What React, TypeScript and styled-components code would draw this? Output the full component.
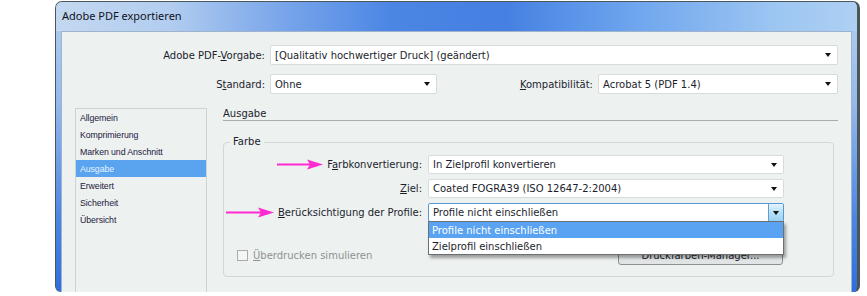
import React, { FC } from "react";
import styled, { createGlobalStyle } from "styled-components";

const GlobalStyle = createGlobalStyle`
  html, body {
    margin: 0;
    padding: 0;
    background: #fff;
  }
  body {
    font-family: "DejaVu Sans", Verdana, sans-serif;
    color: #1b1e2c;
  }
`;

const Screen = styled.div`
  width: 867px;
  height: 296px;
  box-sizing: border-box;
  padding: 1px 7px 4px 55px;
  display: flex;
  overflow: hidden;
  background: #fff;
`;

const Window = styled.div`
  flex: 1;
  display: flex;
  flex-direction: column;
  border: 1px solid #4c5658;
  border-right-width: 3px;
  border-bottom: none;
  border-radius: 7px 7px 6px 6px;
  padding: 0 5px;
  overflow: hidden;
  background: linear-gradient(
    180deg,
    #b4d0f0 0%,
    #94b9ec 35%,
    #4a86e2 75%,
    #2f6fdc 100%
  );
`;

const TitleBar = styled.div`
  height: 29px;
  margin: 0 -5px;
  padding: 0 0 2px 6px;
  box-sizing: border-box;
  display: flex;
  align-items: center;
  font-family: "Noto Sans", "DejaVu Sans", sans-serif;
  font-size: 11px;
  color: #10131c;
  background: linear-gradient(
    90deg,
    #c3d8f0 0%,
    #b2cdf0 14%,
    #7aa6ea 28%,
    #4b86e4 42%,
    #4580e2 56%,
    #6ea5ee 72%,
    #9dc6f2 90%,
    #aed0f3 100%
  );
`;

const Client = styled.div`
  flex: 1;
  display: flex;
  flex-direction: column;
  min-height: 0;
  background: #edf1f0;
  border: 1px solid #9fb4cc;
  border-bottom: none;
  padding: 13px 13px 0 13px;
`;

const TopForm = styled.div`
  display: flex;
  flex-direction: column;
  gap: 9px;
`;

const FieldRow = styled.div`
  display: flex;
  align-items: center;
  gap: 5px;
  height: 20px;
`;

const Label = styled.div<{ $width?: number }>`
  ${(p) => (p.$width ? `width: ${p.$width}px;` : "flex: 1;")}
  flex-shrink: 0;
  display: flex;
  align-items: center;
  justify-content: flex-end;
  gap: 4px;
  font-size: 10px;
  white-space: nowrap;
`;

const SelectBox = styled.div<{ $width?: number; $focused?: boolean }>`
  ${(p) => (p.$width ? `width: ${p.$width}px;` : "flex: 1;")}
  height: 100%;
  box-sizing: border-box;
  position: relative;
  display: flex;
  align-items: stretch;
  background: #fff;
  border: 1px solid ${(p) => (p.$focused ? "#5598d6" : "#d6dcdc")};
  border-radius: 2px;
  font-size: 10px;
`;

const SelectValue = styled.div`
  flex: 1;
  display: flex;
  align-items: center;
  padding-left: 4px;
  white-space: nowrap;
  overflow: hidden;
`;

const ArrowCell = styled.div<{ $focused?: boolean }>`
  width: ${(p) => (p.$focused ? 14 : 18)}px;
  display: flex;
  align-items: center;
  justify-content: center;
  ${(p) =>
    p.$focused
      ? `background: linear-gradient(180deg, #e4f4fc 0%, #b8e0f6 50%, #9ad2f2 100%);
         border-left: 1px solid #5f9fd6;`
      : ""}

  &::after {
    content: "";
    border-left: 3.5px solid transparent;
    border-right: 3.5px solid transparent;
    border-top: 4px solid #111;
  }
`;

const Body = styled.div`
  flex: 1;
  min-height: 0;
  display: flex;
  gap: 16px;
  margin-top: 14px;
`;

const Sidebar = styled.div`
  width: 132px;
  flex-shrink: 0;
  box-sizing: border-box;
  border: 1px solid #cdd4d4;
  border-bottom: none;
  display: flex;
  flex-direction: column;
`;

const NavItem = styled.div<{ $active?: boolean }>`
  height: 17px;
  display: flex;
  align-items: center;
  padding-left: 4px;
  font-family: "Liberation Sans", Arial, sans-serif;
  font-size: 8.8px;
  letter-spacing: -0.1px;
  color: ${(p) => (p.$active ? "#e4f2ff" : "#1c2040")};
  background: ${(p) => (p.$active ? "#5aa3ef" : "transparent")};
`;

const Main = styled.div`
  flex: 1;
  display: flex;
  flex-direction: column;
`;

const Heading = styled.div`
  height: 12px;
  line-height: 12px;
  font-size: 10px;
  border-bottom: 1px solid #a6aeae;
`;

const Group = styled.fieldset`
  margin: 15px 4px 0 0;
  padding: 0 49px 0 0;
  height: 141px;
  box-sizing: border-box;
  min-width: 0;
  border: 1px solid #d0d8d8;
  border-radius: 4px;
`;

const Legend = styled.legend`
  margin-left: 6px;
  padding: 0 3px;
  font-size: 10px;
  line-height: 12px;
`;

const GroupRows = styled.div`
  margin-top: 7px;
  display: flex;
  flex-direction: column;
  gap: 5px;
`;

const GroupRow = styled.div`
  display: flex;
  align-items: center;
  gap: 6px;
  height: 19px;
`;

const Dropdown = styled.div`
  position: absolute;
  top: 100%;
  left: -1px;
  right: -1px;
  z-index: 2;
  background: #fff;
  border: 1px solid #6c7070;
  box-shadow: 2px 3px 3px rgba(0, 0, 0, 0.35);
`;

const Option = styled.div<{ $selected?: boolean }>`
  height: 16px;
  display: flex;
  align-items: center;
  padding-left: 3px;
  font-size: 10px;
  color: ${(p) => (p.$selected ? "#fff" : "#1b1e2c")};
  background: ${(p) => (p.$selected ? "#59a3f2" : "transparent")};
`;

const OptionsRow = styled.div`
  margin-top: 23px;
  height: 20px;
  display: flex;
  align-items: center;
  justify-content: space-between;
  padding-left: 13px;
`;

const CheckLabel = styled.label`
  display: flex;
  align-items: center;
  gap: 5px;
  font-size: 10px;
  color: #8d9292;
`;

const CheckBox = styled.span`
  width: 11px;
  height: 11px;
  box-sizing: border-box;
  border: 1px solid #a9adad;
  background: #f4f6f6;
`;

const Button = styled.button`
  width: 165px;
  height: 20px;
  margin-right: 1px;
  border: 1px solid #8b9090;
  border-radius: 3px;
  background: linear-gradient(180deg, #f4f6f6 0%, #dfe3e3 100%);
  font-family: "DejaVu Sans", Verdana, sans-serif;
  font-size: 10px;
  color: #1b1e2c;
  padding: 0;
`;

const Arrow: FC<{ width: number }> = ({ width }) => (
  <svg width={width} height={11} viewBox={`0 0 ${width} 11`}>
    <line x1={0} y1={5.5} x2={width - 12} y2={5.5} stroke="#ff2ad0" strokeWidth={2} />
    <polygon
      points={`${width - 16},0.5 ${width},5.5 ${width - 16},10.5 ${width - 13},5.5`}
      fill="#ff2ad0"
    />
  </svg>
);

const Select: FC<{ value: string; width?: number; focused?: boolean; children?: React.ReactNode }> = ({
  value,
  width,
  focused,
  children,
}) => (
  <SelectBox $width={width} $focused={focused}>
    <SelectValue>{value}</SelectValue>
    <ArrowCell $focused={focused} />
    {children}
  </SelectBox>
);

const navItems = [
  "Allgemein",
  "Komprimierung",
  "Marken und Anschnitt",
  "Ausgabe",
  "Erweitert",
  "Sicherheit",
  "Übersicht",
];

export default function App() {
  return (
    <>
      <GlobalStyle />
      <Screen>
        <Window>
          <TitleBar>Adobe PDF exportieren</TitleBar>
          <Client>
            <TopForm>
              <FieldRow>
                <Label $width={190}>
                  <span>
                    Adobe PDF-<u>V</u>orgabe:
                  </span>
                </Label>
                <Select value="[Qualitativ hochwertiger Druck] (geändert)" />
              </FieldRow>
              <FieldRow>
                <Label $width={190}>
                  <span>
                    S<u>t</u>andard:
                  </span>
                </Label>
                <Select value="Ohne" width={167} />
                <Label>
                  <span>
                    <u>K</u>ompatibilität:
                  </span>
                </Label>
                <Select value="Acrobat 5 (PDF 1.4)" width={240} />
              </FieldRow>
            </TopForm>
            <Body>
              <Sidebar>
                {navItems.map((item) => (
                  <NavItem key={item} $active={item === "Ausgabe"}>
                    {item}
                  </NavItem>
                ))}
              </Sidebar>
              <Main>
                <Heading>Ausgabe</Heading>
                <Group>
                  <Legend>Farbe</Legend>
                  <GroupRows>
                    <GroupRow>
                      <Label $width={198}>
                        <Arrow width={46} />
                        <span>
                          F<u>a</u>rbkonvertierung:
                        </span>
                      </Label>
                      <Select value="In Zielprofil konvertieren" />
                    </GroupRow>
                    <GroupRow>
                      <Label $width={198}>
                        <span>
                          <u>Z</u>iel:
                        </span>
                      </Label>
                      <Select value="Coated FOGRA39 (ISO 12647-2:2004)" />
                    </GroupRow>
                    <GroupRow>
                      <Label $width={198}>
                        <Arrow width={48} />
                        <span>
                          <u>B</u>erücksichtigung der Profile:
                        </span>
                      </Label>
                      <Select value="Profile nicht einschließen" focused>
                        <Dropdown>
                          <Option $selected>Profile nicht einschließen</Option>
                          <Option>Zielprofil einschließen</Option>
                        </Dropdown>
                      </Select>
                    </GroupRow>
                  </GroupRows>
                  <OptionsRow>
                    <CheckLabel>
                      <CheckBox />
                      <span>
                        <u>Ü</u>berdrucken simulieren
                      </span>
                    </CheckLabel>
                    <Button>Druckfarben-Manager...</Button>
                  </OptionsRow>
                </Group>
              </Main>
            </Body>
          </Client>
        </Window>
      </Screen>
    </>
  );
}
